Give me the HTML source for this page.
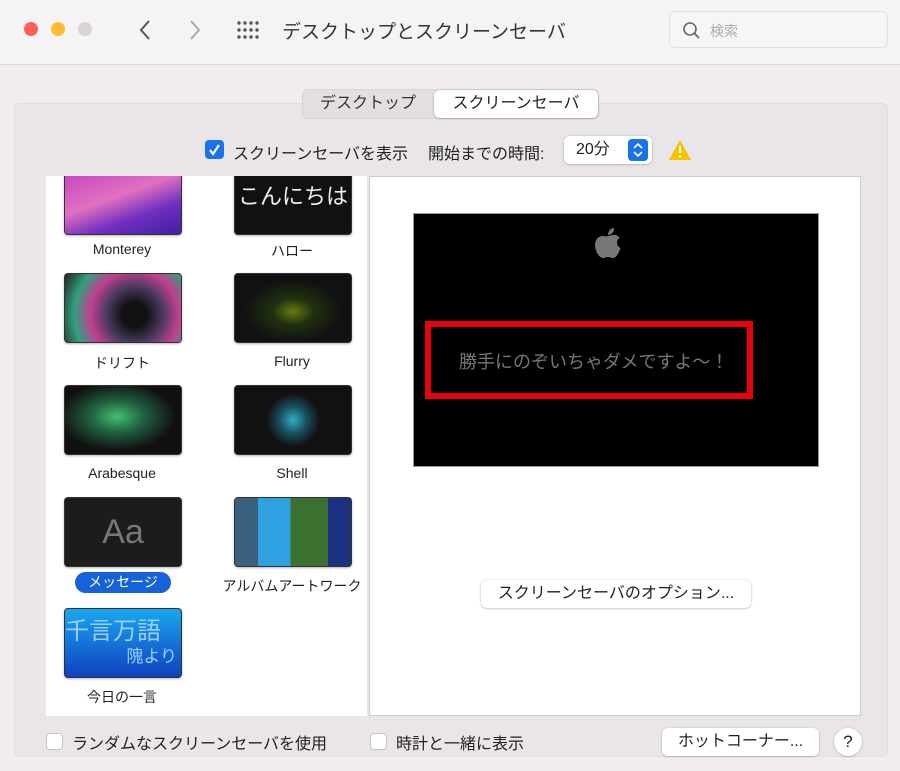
<!DOCTYPE html>
<html><head><meta charset="utf-8"><style>
*{margin:0;padding:0;box-sizing:border-box}
body{width:900px;height:771px;background:#f0ecef;font-family:"Liberation Sans","Noto Sans CJK JP",sans-serif;position:relative;overflow:hidden;color:#222}
.a{position:absolute}
.tb{left:0;top:0;width:900px;height:65px;background:#f6f3f6;border-bottom:1px solid #dcd8db}
.dot{width:14px;height:14px;border-radius:50%;top:22px}
.box{left:14px;top:103px;width:874px;height:654px;background:#e9e5e8;border-radius:6px;border:1px solid #e0dcdf}
.thumb{width:118px;height:70px;border-radius:4px;border:1px solid #333;box-shadow:0 1px 2px rgba(0,0,0,.3)}
.lbl{font-size:14px;text-align:center;width:170px}
.btn{background:#fff;border-radius:6px;box-shadow:0 0.5px 2px rgba(0,0,0,.3);font-size:16px;text-align:center}
.cb{width:17px;height:17px;background:#fff;border:1px solid #c8c4c7;border-radius:4px}
.t16{font-size:16px}
</style></head><body>
<div class="a tb"></div>
<div class="a dot" style="left:24px;background:#fd5f57"></div>
<div class="a dot" style="left:51px;background:#febc2e"></div>
<div class="a dot" style="left:78px;background:#d7d3d6"></div>
<svg class="a" style="left:135px;top:18px" width="80" height="24"><path d="M14 3 L6 12 L14 21" stroke="#555" stroke-width="2" fill="none"/><path d="M56 3 L64 12 L56 21" stroke="#aaa" stroke-width="2" fill="none"/></svg>
<svg class="a" style="left:236px;top:20px" width="24" height="20"><g fill="#555"><circle cx="3" cy="3" r="1.7"/><circle cx="9" cy="3" r="1.7"/><circle cx="15" cy="3" r="1.7"/><circle cx="21" cy="3" r="1.7"/><circle cx="3" cy="10" r="1.7"/><circle cx="9" cy="10" r="1.7"/><circle cx="15" cy="10" r="1.7"/><circle cx="21" cy="10" r="1.7"/><circle cx="3" cy="17" r="1.7"/><circle cx="9" cy="17" r="1.7"/><circle cx="15" cy="17" r="1.7"/><circle cx="21" cy="17" r="1.7"/></g></svg>
<div class="a" style="left:282px;top:17px;font-size:19px;color:#333">デスクトップとスクリーンセーバ</div>
<div class="a" style="left:669px;top:11px;width:219px;height:37px;border:1px solid #e2dee1;border-radius:6px;background:#f8f5f8"></div>
<svg class="a" style="left:682px;top:21px" width="20" height="20"><circle cx="8" cy="8" r="6" stroke="#666" stroke-width="1.6" fill="none"/><path d="M12.5 12.5 L17 17" stroke="#666" stroke-width="1.8"/></svg>
<div class="a" style="left:710px;top:21px;font-size:14px;color:#aaa">検索</div>
<div class="a box"></div>
<div class="a" style="left:302px;top:89px;width:297px;height:30px;background:#e2dee1;border-radius:6px;border:1px solid #d6d2d5"></div>
<div class="a t16" style="left:303px;top:90px;width:130px;height:28px;line-height:28px;text-align:center;color:#333">デスクトップ</div>
<div class="a btn" style="left:434px;top:90px;width:164px;height:28px;line-height:28px">スクリーンセーバ</div>
<div class="a" style="left:205px;top:140px;width:19px;height:19px;background:#1a73e8;border-radius:4px"></div>
<svg class="a" style="left:205px;top:140px" width="19" height="19"><path d="M5 10 L8 14 L14 5" stroke="#fff" stroke-width="2.2" fill="none"/></svg>
<div class="a t16" style="left:233px;top:140px">スクリーンセーバを表示</div>
<div class="a t16" style="left:428px;top:140px">開始までの時間:</div>
<div class="a btn" style="left:564px;top:136px;width:88px;height:28px;line-height:28px;text-align:left;padding-left:12px">20分</div>
<div class="a" style="left:628px;top:139px;width:20px;height:22px;background:#1a73e8;border-radius:4px"></div>
<svg class="a" style="left:628px;top:139px" width="20" height="22"><path d="M6 9 L10 5 L14 9 M6 13 L10 17 L14 13" stroke="#fff" stroke-width="1.6" fill="none"/></svg>
<svg class="a" style="left:668px;top:139px" width="24" height="22"><path d="M12 1 L23 21 L1 21 Z" fill="#f8c400"/><path d="M12 7 L12 14" stroke="#fff" stroke-width="2"/><circle cx="12" cy="17.5" r="1.2" fill="#fff"/></svg>
<div class="a" style="left:369px;top:176px;width:492px;height:540px;background:#fff;border:1px solid #ccc"></div>
<div class="a" style="left:46px;top:176px;width:321px;height:540px;background:#fff;overflow:hidden">
<div class="a" style="left:-46px;top:-176px;width:367px;height:716px">
<div class="a thumb" style="left:64px;top:165px;background:linear-gradient(160deg,#c040c0,#e070c0 45%,#7030c0 70%,#4020a0)"></div>
<div class="a lbl" style="left:37px;top:241px">Monterey</div>
<div class="a thumb" style="left:234px;top:165px;background:#111;color:#eee;font-size:22px;text-align:center;line-height:62px">こんにちは</div>
<div class="a lbl" style="left:207px;top:241px">ハロー</div>
<div class="a thumb" style="left:64px;top:273px;background:radial-gradient(circle at 60% 60%,#111 15%,#4a3a60 35%,#c04090 55%,#30a080 75%,#222)"></div>
<div class="a lbl" style="left:37px;top:353px">ドリフト</div>
<div class="a thumb" style="left:234px;top:273px;background:radial-gradient(ellipse at 50% 55%,#6a7a10 0%,#203010 25%,#111 60%)"></div>
<div class="a lbl" style="left:207px;top:353px">Flurry</div>
<div class="a thumb" style="left:64px;top:385px;background:radial-gradient(ellipse at 45% 45%,#40c070 0%,#206040 30%,#101010 65%)"></div>
<div class="a lbl" style="left:37px;top:465px">Arabesque</div>
<div class="a thumb" style="left:234px;top:385px;background:radial-gradient(circle at 50% 50%,#30b0c0 0%,#1a5060 20%,#111 40%)"></div>
<div class="a lbl" style="left:207px;top:465px">Shell</div>
<div class="a thumb" style="left:64px;top:497px;background:#1c1c1c;color:#777;font-size:34px;text-align:center;line-height:68px">Aa</div>
<div class="a" style="left:75px;top:572px;width:96px;height:21px;background:#1662d9;border-radius:11px;color:#fff;font-size:14px;text-align:center;line-height:21px">メッセージ</div>
<div class="a thumb" style="left:234px;top:497px;background:linear-gradient(90deg,#3a6080 0 20%,#30a0e0 20% 48%,#3a7030 48% 80%,#1a3080 80%)"></div>
<div class="a lbl" style="left:207px;top:576px">アルバムアートワーク</div>
<div class="a thumb" style="left:64px;top:608px;background:linear-gradient(#19a8f0,#1040c0);color:#9ad0ff;font-size:24px;overflow:hidden;white-space:nowrap;padding-top:2px">千言万語<div style="font-size:17px;text-align:right;padding-right:4px;margin-top:-4px">隗より</div></div>
<div class="a lbl" style="left:37px;top:687px">今日の一言</div>
</div></div>
<div class="a" style="left:413px;top:213px;width:406px;height:254px;background:#000;border:1px solid #999"></div>
<svg class="a" style="left:592px;top:226px" width="32" height="40" viewBox="0 0 32 40"><path d="M16 10 C18 10 21 8 24 9 C26 10 27 11 27.5 12 C24 14 24 20 28.5 22 C27 27 24 32 21 32 C19 32 18 31 16 31 C14 31 13 32 11 32 C7 32 3 25 3 19 C3 13 7 10 10.5 10 C13 10 14 11 16 10 Z M16 9 C16 5 19 2 22 2 C22.5 6 19 9 16 9 Z" fill="#777"/></svg>
<div class="a" style="left:425px;top:321px;width:328px;height:78px;border:6px solid #e8000a"></div>
<div class="a" style="left:459px;top:348px;font-size:18px;color:#777">勝手にのぞいちゃダメですよ〜！</div>
<div class="a btn" style="left:481px;top:580px;width:270px;height:28px;line-height:28px">スクリーンセーバのオプション...</div>
<div class="a cb" style="left:46px;top:733px"></div>
<div class="a t16" style="left:72px;top:730px">ランダムなスクリーンセーバを使用</div>
<div class="a cb" style="left:370px;top:733px"></div>
<div class="a t16" style="left:396px;top:730px">時計と一緒に表示</div>
<div class="a btn" style="left:662px;top:728px;width:157px;height:28px;line-height:28px">ホットコーナー...</div>
<div class="a btn" style="left:834px;top:728px;width:28px;height:28px;border-radius:50%;line-height:28px;font-size:17px">?</div>
</body></html>
